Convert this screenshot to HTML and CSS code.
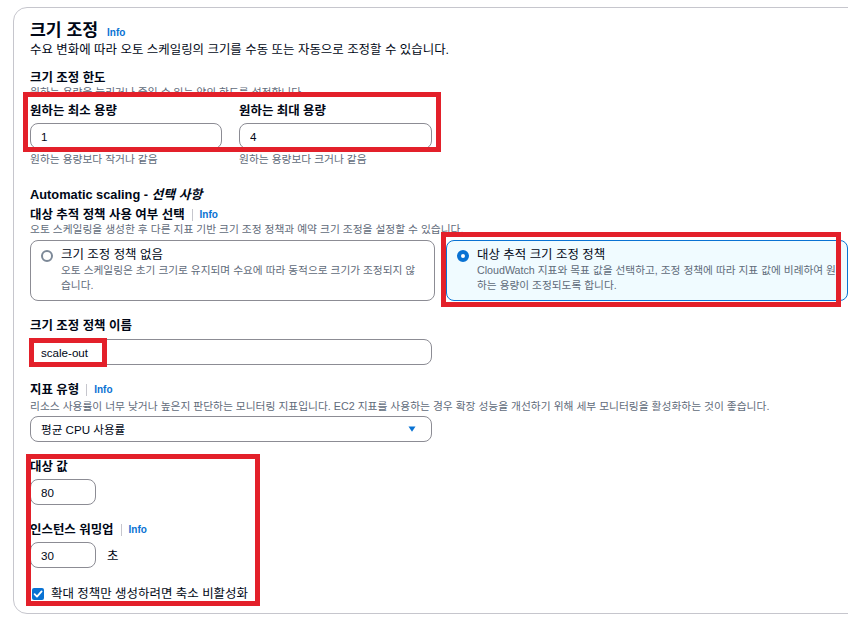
FILE: index.html
```html
<!DOCTYPE html>
<html lang="ko">
<head>
<meta charset="utf-8">
<title>크기 조정</title>
<link rel="stylesheet" href="styles.css">
</head>
<body>
<div class="page">
  <section class="card">
    <h2 class="title">크기 조정<a class="info info-title">Info</a></h2>
    <p class="subtitle">수요 변화에 따라 오토 스케일링의 크기를 수동 또는 자동으로 조정할 수 있습니다.</p>

    <h3 class="label sec-limits">크기 조정 한도</h3>
    <p class="hint hint-tight">원하는 용량을 늘리거나 줄일 수 있는 양의 한도를 설정합니다.</p>
    <div class="pair">
      <div class="field">
        <label class="label">원하는 최소 용량</label>
        <input class="input full" type="text" value="1">
        <p class="hint hint-below">원하는 용량보다 작거나 같음</p>
      </div>
      <div class="field">
        <label class="label">원하는 최대 용량</label>
        <input class="input full" type="text" value="4">
        <p class="hint hint-below">원하는 용량보다 크거나 같음</p>
      </div>
    </div>

    <h3 class="heading">Automatic scaling - <em>선택 사항</em></h3>
    <div class="label label-row row-tight">대상 추적 정책 사용 여부 선택<span class="sep"></span><a class="info">Info</a></div>
    <p class="hint hint-tight">오토 스케일링을 생성한 후 다른 지표 기반 크기 조정 정책과 예약 크기 조정을 설정할 수 있습니다.</p>
    <div class="tiles">
      <div class="tile">
        <span class="radio"></span>
        <div class="tile-body">
          <div class="tile-label">크기 조정 정책 없음</div>
          <div class="tile-desc">오토 스케일링은 초기 크기로 유지되며 수요에 따라 동적으로 크기가 조정되지 않<br>습니다.</div>
        </div>
      </div>
      <div class="tile selected">
        <span class="radio on"></span>
        <div class="tile-body">
          <div class="tile-label">대상 추적 크기 조정 정책</div>
          <div class="tile-desc">CloudWatch 지표와 목표 값을 선택하고, 조정 정책에 따라 지표 값에 비례하여 원<br>하는 용량이 조정되도록 합니다.</div>
        </div>
      </div>
    </div>

    <div class="group">
      <label class="label">크기 조정 정책 이름</label>
      <input class="input wide name-input" type="text" value="scale-out">
    </div>

    <div class="group">
      <div class="label label-row">지표 유형<span class="sep"></span><a class="info">Info</a></div>
      <p class="hint hint-metric">리소스 사용률이 너무 낮거나 높은지 판단하는 모니터링 지표입니다. EC2 지표를 사용하는 경우 확장 성능을 개선하기 위해 세부 모니터링을 활성화하는 것이 좋습니다.</p>
      <div class="select wide">
        <span>평균 CPU 사용률</span>
        <svg class="caret" width="14" height="14" viewBox="0 0 16 16" aria-hidden="true"><path d="M4 5h8l-4 6-4-6z" fill="#0972d3"/></svg>
      </div>
    </div>

    <div class="group">
      <label class="label">대상 값</label>
      <input class="input small" type="text" value="80">
    </div>

    <div class="group">
      <div class="label label-row">인스턴스 워밍업<span class="sep"></span><a class="info">Info</a></div>
      <div class="unit-row">
        <input class="input small" type="text" value="30">
        <span class="unit">초</span>
      </div>
    </div>

    <div class="check-row">
      <span class="checkbox"><svg width="12" height="12" viewBox="0 0 12 12" aria-hidden="true"><polyline points="2.6,6.2 5,8.6 9.6,3.4" fill="none" stroke="#fff" stroke-width="1.8" stroke-linecap="round" stroke-linejoin="round"/></svg></span>
      <span class="check-label">확대 정책만 생성하려면 축소 비활성화</span>
    </div>
  </section>

  <div class="mark mark-limits"></div>
  <div class="mark mark-tile"></div>
  <div class="mark mark-name"></div>
  <div class="mark mark-target"></div>
</div>
</body>
</html>
```

FILE: styles.css
```css
* {
  box-sizing: border-box;
}

html,
body {
  margin: 0;
  padding: 0;
  background: #ffffff;
  overflow: hidden;
}

body {
  font-family: "Liberation Sans", "Noto Sans CJK KR", sans-serif;
  color: #000716;
}

.page {
  position: relative;
  width: 848px;
  height: 620px;
  overflow: hidden;
  padding: 7px 0 0 13px;
}

.card {
  width: 900px;
  height: 607px;
  border: 1px solid #c6c6cd;
  border-radius: 14px;
  padding: 12px 0 0 16px;
  background: #ffffff;
}

.title {
  margin: 0;
  height: 20px;
  font-size: 17.2px;
  line-height: 20px;
  font-weight: 700;
}

.info {
  color: #0972d3;
  font-size: 10px;
  line-height: 1;
  font-weight: 700;
  text-decoration: none;
}

.info-title {
  margin-left: 9px;
}

.subtitle {
  margin: 2px 0 0;
  font-size: 12.45px;
  line-height: 16px;
}

.label {
  display: block;
  margin: 0;
  font-size: 12.45px;
  line-height: 16px;
  font-weight: 700;
}

.label-row {
  display: flex;
  align-items: center;
  height: 16px;
}

.sep {
  display: inline-block;
  width: 1px;
  height: 12px;
  background: #c6c6cd;
  margin: 0 7px;
}

.sec-limits {
  margin-top: 12px;
}

.hint {
  margin: 0;
  font-size: 10.75px;
  line-height: 14px;
  color: #5f6b7a;
  white-space: nowrap;
}

.hint-tight {
  margin-top: -1px;
}

.hint-below {
  margin-top: 3px;
}

.hint-metric {
  margin-top: 1px;
}

.pair {
  display: grid;
  grid-template-columns: 192px 193px;
  column-gap: 17px;
  margin-top: 4px;
}

.field .input {
  margin-top: 4px;
}

.input {
  display: block;
  height: 26px;
  border: 1px solid #8c8c94;
  border-radius: 8px;
  padding: 0 10px;
  font-family: "Liberation Sans", "Noto Sans CJK KR", sans-serif;
  font-size: 11.6px;
  color: #000716;
  background: #ffffff;
  outline: none;
}

.full {
  width: 100%;
}

.wide {
  width: 402px;
}

.small {
  width: 66px;
}

.heading {
  margin: 20px 0 0;
  font-size: 12.8px;
  line-height: 18px;
  font-weight: 700;
}

.heading em {
  font-style: italic;
}

.row-tight {
  margin-top: 3px;
}

.tiles {
  display: grid;
  grid-template-columns: 405px 402px;
  column-gap: 11px;
  margin-top: 4px;
}

.tile {
  display: flex;
  align-items: flex-start;
  gap: 8px;
  height: 61px;
  border: 1px solid #8c8c94;
  border-radius: 8px;
  padding: 7px 10px 0;
}

.tile.selected {
  border-color: #0972d3;
  background: #f0fbff;
}

.radio {
  flex: none;
  width: 12px;
  height: 12px;
  margin-top: 2px;
  border: 2px solid #7d8998;
  border-radius: 50%;
  background: #ffffff;
}

.radio.on {
  border: 4px solid #0972d3;
}

.tile-label {
  font-size: 12.45px;
  line-height: 15px;
}

.tile-desc {
  font-size: 10.7px;
  line-height: 15px;
  color: #5f6b7a;
  white-space: nowrap;
}

.group {
  margin-top: 17px;
}

.group > .label + .input {
  margin-top: 4px;
}

.group > .label + .name-input {
  margin-top: 5px;
}

.select {
  display: flex;
  align-items: center;
  justify-content: space-between;
  height: 26px;
  margin-top: 3px;
  border: 1px solid #8c8c94;
  border-radius: 8px;
  padding: 0 12px 0 10px;
  font-size: 11.6px;
}

.caret {
  display: block;
}

.unit-row {
  display: flex;
  align-items: center;
  gap: 11px;
  margin-top: 4px;
}

.unit {
  font-size: 12.45px;
}

.check-row {
  display: flex;
  align-items: center;
  gap: 7px;
  margin-top: 18px;
  height: 16px;
}

.checkbox {
  display: flex;
  align-items: center;
  justify-content: center;
  width: 12px;
  height: 12px;
  margin-left: 2px;
  border-radius: 2px;
  background: #0972d3;
}

.check-label {
  font-size: 12.45px;
  line-height: 16px;
}

.mark {
  position: absolute;
  border: 5px solid #e3202a;
  pointer-events: none;
}

.mark-limits {
  left: 23px;
  top: 92px;
  width: 418px;
  height: 60px;
}

.mark-tile {
  left: 441px;
  top: 232px;
  width: 400px;
  height: 75px;
}

.mark-name {
  left: 29px;
  top: 338px;
  width: 78px;
  height: 29px;
}

.mark-target {
  left: 26px;
  top: 454px;
  width: 234px;
  height: 152px;
}
```
